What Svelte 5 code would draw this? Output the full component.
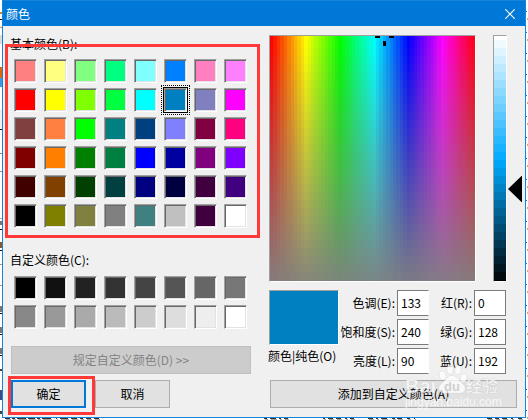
<script>
  const basicColors = [
    '#ff8080', '#ffff80', '#80ff80', '#00ff80', '#80ffff', '#0080ff', '#ff80c0', '#ff80ff',
    '#ff0000', '#ffff00', '#80ff00', '#00ff40', '#00ffff', '#0080c0', '#8080c0', '#ff00ff',
    '#804040', '#ff8040', '#00ff00', '#008080', '#004080', '#8080ff', '#800040', '#ff0080',
    '#800000', '#ff8000', '#008000', '#008040', '#0000ff', '#0000a0', '#800080', '#8000ff',
    '#400000', '#804000', '#004000', '#004040', '#000080', '#000040', '#400040', '#400080',
    '#000000', '#808000', '#808040', '#808080', '#408080', '#c0c0c0', '#400040', '#ffffff'
  ];
  const customColors = [
    '#000000', '#111111', '#222222', '#333333', '#444444', '#555555', '#666666', '#777777',
    '#888888', '#999999', '#aaaaaa', '#bbbbbb', '#cccccc', '#dddddd', '#eeeeee', '#ffffff'
  ];

  let selected = $state(13);
  let hue = $state(133);
  let sat = $state(240);
  let lum = $state(90);
  let red = $state(0);
  let green = $state(128);
  let blue = $state(192);

  let preview = $derived(`rgb(${red}, ${green}, ${blue})`);
  let arrowTop = $derived(((240 - lum) / 240) * 100);

  const hueSteps = Array.from({ length: 60 }, (_, i) => i);
  const bands = Array.from({ length: 32 }, (_, i) => i);

  function pick(i) {
    selected = i;
    const c = basicColors[i];
    red = parseInt(c.slice(1, 3), 16);
    green = parseInt(c.slice(3, 5), 16);
    blue = parseInt(c.slice(5, 7), 16);
  }

  // Row positions of the list that shows past the dialog's edge
  const rightRows = Array.from({ length: 20 }, (_, i) => 11 + i * 21);
  const leftMarks = [
    [12, 2, '#c98a3c'], [19, 1, '#111'], [27, 1, '#999'], [35, 9, '#dcdcdc'],
    [67, 11, '#e0640c'], [78, 9, '#3b9be0'], [109, 20, '#f1f1f1'], [129, 1, '#111'],
    [153, 1, '#888'], [171, 1, '#888'], [218, 1, '#aaa'], [221, 4, '#777'],
    [229, 1, '#111'], [242, 6, '#8a5a2c'], [250, 1, '#111'], [264, 1, '#999'],
    [285, 1, '#999'], [306, 6, '#777'], [313, 1, '#111'], [327, 6, '#777'],
    [334, 1, '#111'], [348, 6, '#777'], [355, 1, '#111'], [369, 2, '#444'],
    [390, 10, '#3a4a8a'], [411, 3, '#444']
  ];
  const bottomMarks = [
    [5, 5], [12, 3], [17, 9], [28, 7], [37, 3], [42, 9], [56, 1], [60, 8], [71, 6], [80, 3],
    [86, 5], [94, 5], [264, 3], [270, 6], [279, 2], [284, 4], [323, 2], [328, 5], [336, 5],
    [345, 2], [350, 4], [368, 5], [376, 2], [381, 6], [392, 3], [397, 5], [407, 3], [414, 1],
    [487, 5], [495, 4], [502, 5], [511, 2], [518, 4]
  ];
</script>

<div class="desktop">
  <svg class="scraps" aria-hidden="true" shape-rendering="crispEdges">
    {#each leftMarks as [y, h, fill]}
      <rect x="0" {y} width="2" height={h} {fill} />
    {/each}
    {#each bottomMarks as [x, w]}
      <rect {x} y="418" width={w} height="1" fill="#333" />
      <rect x={x + 1} y="419" width={w} height="1" fill="#a8a090" />
    {/each}
    {#each rightRows as y}
      <rect x="526" {y} width="1" height="1" fill="#0078d7" />
      <rect x="527" y={y + 7} width="1" height="2" fill="#dba75c" />
    {/each}
  </svg>

  <main class="dialog">
    <header class="titlebar">
      <span>颜色</span>
      <button class="close" aria-label="关闭">
        <svg viewBox="0 0 10 10" width="10" height="10"><path d="M0.3 0.3 9.7 9.7M9.7 0.3 0.3 9.7" stroke="#fff" stroke-width="1.2" fill="none" /></svg>
      </button>
    </header>

    <div class="body">
      <div class="palette">
        <section class="basic">
          <h2>基本颜色(B):</h2>
          <div class="swatches">
            {#each basicColors as color, i}
              <button class="swatch" class:selected={selected === i} style:background-color={color} aria-label={color} onclick={() => pick(i)}></button>
            {/each}
          </div>
          <div class="mark mark-basic"></div>
        </section>

        <section class="custom">
          <h2>自定义颜色(C):</h2>
          <div class="swatches">
            {#each customColors as color}
              <button class="swatch" style:background-color={color} aria-label={color}></button>
            {/each}
          </div>
        </section>

        <button class="btn define" disabled>规定自定义颜色(D) &gt;&gt;</button>
        <div class="actions">
          <div class="ok-wrap">
            <button class="btn ok">确定</button>
            <div class="mark mark-ok"></div>
          </div>
          <button class="btn cancel">取消</button>
        </div>
      </div>

      <div class="mixer">
        <div class="pickers">
          <div class="sunken spectrum">
            <svg viewBox="0 0 205 245" preserveAspectRatio="none" shape-rendering="crispEdges">
              {#each hueSteps as i}
                <rect x={(i * 205) / 60} y="0" width="4" height="245" fill={`hsl(${i * 6}, 100%, 50%)`} />
              {/each}
              {#each bands as i}
                <rect x="0" y={i * 8 - 4} width="205" height="8" fill="#808080" opacity={i / 32} />
              {/each}
              <path d="M105 0h5v2h-5zM119 0h5v2h-5zM113 5h3v5h-3z" fill="#000" />
            </svg>
          </div>
          <div class="lum-wrap">
            <div class="sunken lum">
              <svg viewBox="0 0 12 245" preserveAspectRatio="none" shape-rendering="crispEdges">
                {#each bands as i}
                  <rect x="0" y={i * 8 - 4} width="12" height="8" fill={`hsl(200, 100%, ${100 - (i * 100) / 31}%)`} />
                {/each}
              </svg>
            </div>
            <svg class="arrow" style:top={`${arrowTop}%`} viewBox="0 0 14 27" width="14" height="27"><path d="M0 13.5 14 0V27z" /></svg>
            <input class="lum-range" type="range" min="0" max="240" bind:value={lum} aria-label="亮度" />
          </div>
        </div>

        <div class="values">
          <div class="preview-col">
            <div class="sunken preview" style:background-color={preview}></div>
            <span class="preview-label">颜色|纯色(O)</span>
          </div>
          <div class="fields">
            <label for="hue">色调(E):</label>
            <input id="hue" class="clipped" type="text" bind:value={hue} />
            <label for="red">红(R):</label>
            <input id="red" type="text" bind:value={red} />
            <label for="sat">饱和度(S):</label>
            <input id="sat" class="clipped" type="text" bind:value={sat} />
            <label for="green">绿(G):</label>
            <input id="green" type="text" bind:value={green} />
            <label for="lum">亮度(L):</label>
            <input id="lum" class="clipped" type="text" bind:value={lum} />
            <label for="blue">蓝(U):</label>
            <input id="blue" type="text" bind:value={blue} />
          </div>
        </div>

        <div class="add-wrap">
          <button class="btn add">添加到自定义颜色(A)</button>
          <svg class="watermark" viewBox="0 0 100 46" width="100" height="46" aria-hidden="true">
            <text class="wm-big" x="2" y="29">Bai</text>
            <ellipse cx="39.500" cy="11.500" rx="3.300" ry="4.500" transform="rotate(-15 39.500 11.500)" />
            <ellipse cx="47" cy="5.500" rx="3.200" ry="4.500" />
            <ellipse cx="55" cy="6" rx="3.200" ry="4.500" transform="rotate(12 55 6)" />
            <ellipse cx="60.500" cy="14" rx="3.200" ry="4.500" transform="rotate(18 60.500 14)" />
            <path d="M49 11.500c4.500 0 6 3.500 9 6.500 3 2.600 5 5 4 8-1.300 3.700-5 3.500-13 3.200-7.500.3-11.700.5-13-3.200-1-3 1-5.400 4-8 3-2.800 4.500-6.500 9-6.500z" />
            <text class="wm-du" x="41" y="27">du</text>
            <text class="wm-cn" x="63" y="28">经验</text>
            <text class="wm-url" x="2" y="42">jingyan.baidu.com</text>
          </svg>
        </div>
      </div>
    </div>
  </main>
</div>

<style>
  :global(body) {
    background: #fff;
    overflow: hidden;
  }
  .desktop {
    position: relative;
    padding: 0 2px 2px;
    font: 12px/16px 'Noto Sans CJK SC', 'Noto Sans', sans-serif;
    color: #000;
  }
  .scraps {
    position: absolute;
    inset: 0;
    width: 100%;
    height: 100%;
  }
  .dialog {
    position: relative;
    box-sizing: border-box;
    background: #f0f0f0;
    border: 1px solid #1883d7;
  }
  .titlebar {
    display: flex;
    align-items: center;
    justify-content: space-between;
    height: 25px;
    padding: 0 10px 0 3px;
    background: #0078d7;
    color: #fff;
  }
  .close {
    display: flex;
    padding: 0;
    border: 0;
    background: none;
  }
  .body {
    display: flex;
    gap: 18px;
    padding: 9px 8px;
  }
  .palette {
    flex: 0 0 240px;
    padding-top: 1px;
  }
  h2 {
    margin: 0 0 7px -1px;
    font-size: 12px;
    font-weight: 400;
    line-height: 16px;
  }
  .basic {
    position: relative;
  }
  .custom {
    margin-top: 24px;
  }
  .custom h2 {
    margin-bottom: 8px;
  }
  .swatches {
    display: grid;
    grid-template-columns: repeat(8, 23px);
    gap: 5px 7px;
    padding-left: 3px;
  }
  .swatch {
    position: relative;
    height: 24px;
    padding: 0;
    border: 1px solid;
    border-color: #a0a0a0 #fff #fff #a0a0a0;
    border-radius: 0;
    box-shadow: inset 1px 1px #696969, inset -1px -1px #e3e3e3;
  }
  .swatch.selected {
    outline: 1px solid #000;
  }
  .swatch.selected::after {
    content: '';
    position: absolute;
    inset: -4px;
    border: 1px dotted #000;
  }
  .mark {
    position: absolute;
    border: 3px solid #ff3838;
    pointer-events: none;
  }
  .mark-basic {
    inset: 8px -9px -10px -6px;
  }
  .mark-ok {
    inset: -4px -9px -7px -3px;
  }
  .btn {
    box-sizing: border-box;
    height: 28px;
    padding: 0;
    border: 1px solid #adadad;
    border-radius: 0;
    background: #e1e1e1;
    color: #000;
    font: inherit;
  }
  .define {
    display: block;
    width: 100%;
    margin-top: 17px;
    border-color: #bfbfbf;
    background: #ccc;
    color: #838383;
  }
  .actions {
    display: flex;
    gap: 9px;
    margin-top: 6px;
  }
  .ok-wrap {
    position: relative;
    display: flex;
  }
  .ok,
  .cancel {
    width: 75px;
  }
  .ok {
    border: 2px solid #0078d7;
  }
  .mixer {
    flex: 1;
    min-width: 0;
  }
  .pickers {
    display: flex;
    gap: 17px;
    height: 247px;
  }
  .sunken {
    box-sizing: border-box;
    border: 1px solid;
    border-color: #a0a0a0 #fff #fff #a0a0a0;
  }
  .sunken svg {
    display: block;
    width: 100%;
    height: 100%;
  }
  .spectrum {
    flex: 0 0 207px;
  }
  .lum-wrap {
    position: relative;
    width: 14px;
  }
  .lum {
    height: 100%;
  }
  .arrow {
    position: absolute;
    left: 15px;
    transform: translateY(-50%);
  }
  .lum-range {
    position: absolute;
    inset: 0;
    width: 100%;
    height: 100%;
    margin: 0;
    writing-mode: vertical-lr;
    direction: rtl;
    opacity: 0;
  }
  .values {
    display: flex;
    margin-top: 8px;
  }
  .preview-col {
    flex: 0 0 70px;
  }
  .preview {
    height: 55px;
  }
  .preview-label {
    display: block;
    margin: 3px 0 0 -1px;
    white-space: nowrap;
  }
  .fields {
    display: grid;
    grid-template-columns: 56px 32px 41px 32px;
    gap: 3px 2px;
    align-items: center;
  }
  .fields label {
    justify-self: end;
    white-space: nowrap;
  }
  .fields input {
    box-sizing: border-box;
    width: 100%;
    height: 26px;
    padding: 0 0 2px 3px;
    border: 1px solid #7a7a7a;
    border-radius: 0;
    background: #fff;
    color: #000;
    font: inherit;
  }
  .fields .clipped {
    border-right-color: #fff;
  }
  .add-wrap {
    position: relative;
    margin: 6px 0 0 1px;
  }
  .add {
    display: block;
    width: 100%;
  }
  .watermark {
    position: absolute;
    right: 14px;
    bottom: -2px;
    overflow: visible;
    fill: #fff;
    fill-opacity: 0.75;
    stroke: #909090;
    stroke-opacity: 0.25;
    stroke-width: 0.6px;
    pointer-events: none;
  }
  .wm-big {
    font: 700 20px 'Liberation Sans', sans-serif;
  }
  .wm-du {
    font: 700 13px 'Liberation Sans', sans-serif;
    fill: #d0d0d0;
    fill-opacity: 1;
    stroke: none;
  }
  .wm-cn {
    font: 700 16px 'Noto Sans CJK SC', sans-serif;
  }
  .wm-url {
    font: 12px 'Liberation Sans', sans-serif;
    stroke: none;
  }
</style>
